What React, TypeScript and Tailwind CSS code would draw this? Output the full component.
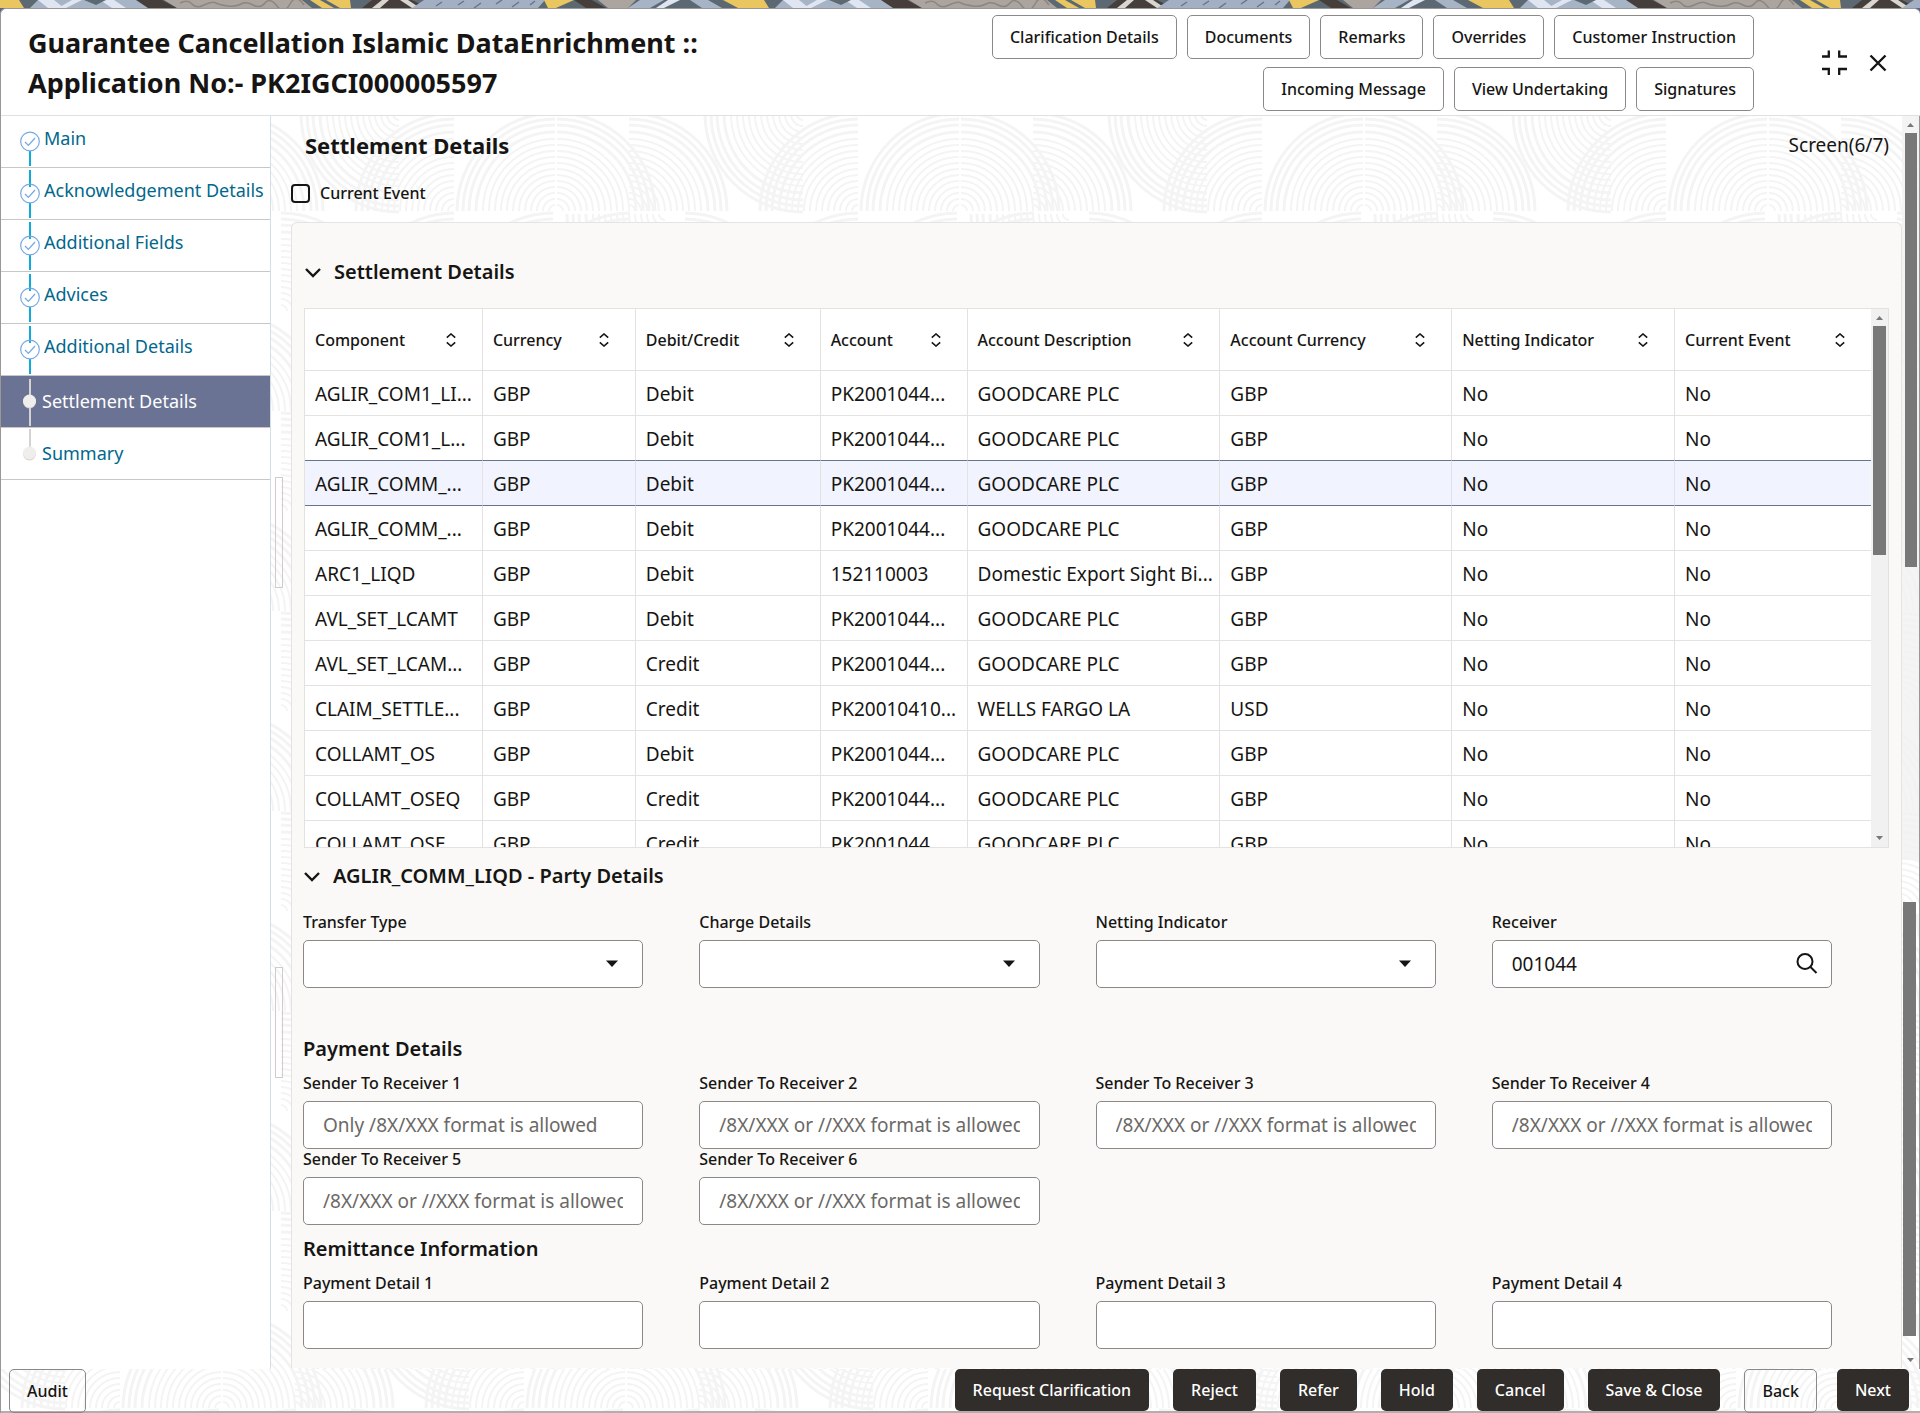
import React, { useState } from 'react';

interface Settlement {
  component: string;
  currency: string;
  type: string;
  account: string;
  description: string;
  accountCurrency: string;
}

interface Column {
  label: string;
  width: number;
}

const columns: Column[] = [
  { label: 'Component', width: 178 },
  { label: 'Currency', width: 153 },
  { label: 'Debit/Credit', width: 185 },
  { label: 'Account', width: 147 },
  { label: 'Account Description', width: 253 },
  { label: 'Account Currency', width: 232 },
  { label: 'Netting Indicator', width: 223 },
  { label: 'Current Event', width: 196 }
];

const settlements: Settlement[] = [
  { component: 'AGLIR_COM1_LI...', currency: 'GBP', type: 'Debit', account: 'PK2001044...', description: 'GOODCARE PLC', accountCurrency: 'GBP' },
  { component: 'AGLIR_COM1_L...', currency: 'GBP', type: 'Debit', account: 'PK2001044...', description: 'GOODCARE PLC', accountCurrency: 'GBP' },
  { component: 'AGLIR_COMM_...', currency: 'GBP', type: 'Debit', account: 'PK2001044...', description: 'GOODCARE PLC', accountCurrency: 'GBP' },
  { component: 'AGLIR_COMM_...', currency: 'GBP', type: 'Debit', account: 'PK2001044...', description: 'GOODCARE PLC', accountCurrency: 'GBP' },
  { component: 'ARC1_LIQD', currency: 'GBP', type: 'Debit', account: '152110003', description: 'Domestic Export Sight Bi...', accountCurrency: 'GBP' },
  { component: 'AVL_SET_LCAMT', currency: 'GBP', type: 'Debit', account: 'PK2001044...', description: 'GOODCARE PLC', accountCurrency: 'GBP' },
  { component: 'AVL_SET_LCAM...', currency: 'GBP', type: 'Credit', account: 'PK2001044...', description: 'GOODCARE PLC', accountCurrency: 'GBP' },
  { component: 'CLAIM_SETTLE...', currency: 'GBP', type: 'Credit', account: 'PK20010410...', description: 'WELLS FARGO LA', accountCurrency: 'USD' },
  { component: 'COLLAMT_OS', currency: 'GBP', type: 'Debit', account: 'PK2001044...', description: 'GOODCARE PLC', accountCurrency: 'GBP' },
  { component: 'COLLAMT_OSEQ', currency: 'GBP', type: 'Credit', account: 'PK2001044...', description: 'GOODCARE PLC', accountCurrency: 'GBP' },
  { component: 'COLLAMT_OSE...', currency: 'GBP', type: 'Credit', account: 'PK2001044...', description: 'GOODCARE PLC', accountCurrency: 'GBP' }
];

const steps = ['Main', 'Acknowledgement Details', 'Additional Fields', 'Advices', 'Additional Details', 'Settlement Details', 'Summary'];
const currentStep = 5;

const FORMAT_HINT = '/8X/XXX or //XXX format is allowed';

// Concentric quarter circles, used to build the background texture
const Arcs = ({ cx, cy, quadrant }: { cx: number; cy: number; quadrant: 'tl' | 'tr' | 'bl' }) => {
  const sx = quadrant === 'tr' ? 1 : -1;
  const sy = quadrant === 'bl' ? 1 : -1;
  const sweep = quadrant === 'tl' ? 1 : 0;
  return (
    <g>
      {[6, 12, 18, 24, 30, 36, 42, 48, 54, 60, 66, 72, 79, 86, 92, 98].map(r => (
        <path
          key={r}
          d={`M${cx + sx * r} ${cy} A${r} ${r} 0 0 ${sweep} ${cx} ${cy + sy * r}`}
          strokeWidth={r > 76 ? 3 : 2}
        />
      ))}
    </g>
  );
};

const Texture = ({ id, x, y }: { id: string; x: number; y: number }) => (
  <svg className="pointer-events-none absolute inset-0 h-full w-full" aria-hidden="true">
    <defs>
      <pattern id={id} x={x} y={y} width="404" height="200" patternUnits="userSpaceOnUse">
        <g fill="none" stroke="#f4f4f4">
          <Arcs cx={100} cy={99} quadrant="tl" />
          <Arcs cx={102} cy={99} quadrant="tr" />
          <Arcs cx={174} cy={99} quadrant="tr" />
          <Arcs cx={348} cy={2} quadrant="bl" />
          <Arcs cx={403} cy={99} quadrant="tl" />
          <Arcs cx={98} cy={199} quadrant="tl" />
          <Arcs cx={175} cy={199} quadrant="tl" />
          <Arcs cx={210} cy={102} quadrant="bl" />
          <Arcs cx={230} cy={199} quadrant="tr" />
          <Arcs cx={403} cy={199} quadrant="tl" />
        </g>
      </pattern>
    </defs>
    <rect width="100%" height="100%" fill={`url(#${id})`} />
  </svg>
);

const Banner = () => (
  <svg className="block h-2 w-full" aria-hidden="true">
    <defs>
      <pattern id="banner" width="745" height="8" patternUnits="userSpaceOnUse">
        <rect width="745" height="8" fill="#5c6872" />
        <path d="M0 0H19L24 8H0Z M723 0H745V8H738Z" fill="#eac660" />
        <path d="M38 0H146L160 8H30Z" fill="#a7b4c6" />
        <path d="M38 0H54L64 8H48Z M72 0H82L66 8H58Z M100 0H114L126 8H112Z" fill="#dfe6f2" />
        <path d="M84 0H106L96 5Z" fill="#5c6872" />
        <path d="M136 0H162L177 8H148Z" fill="#453e3b" />
        <path d="M164 0H302L312 8H177Z" fill="#aca59f" />
        <path
          d="M180 3q8 -4 12 1t12 1t12 -2t12 3t13 -2t12 1t12 -2t12 3t13 -2t14 1"
          fill="none"
          stroke="#8b8681"
          strokeWidth="1.5"
        />
        <path d="M310 0H320L334 8H322Z M326 0H350L351 8H340Z" fill="#eac660" />
        <path d="M372 0H412L428 8H362Z" fill="#453e3b" />
        <path d="M382 0H389L380 8H372Z M400 0H408L420 8H412Z" fill="#d9d5d0" />
        <path d="M424 0H545L538 8H412Z" fill="#a3b0c3" />
        <path d="M436 6l6-4M458 5l6-4M474 8l7-5M496 4l6-4M512 7l7-5M530 5l5-4" stroke="#68758a" strokeWidth="1.5" />
        <path d="M544 0H574L556 8H548Z" fill="#eac660" />
        <path d="M574 0H592L606 8H586Z" fill="#453e3b" />
        <path d="M598 0H636L628 8H608Z" fill="#aca59f" />
        <path d="M640 0H664L650 8H628Z M690 0H708L722 8H702Z" fill="#a7b4c6" />
        <path d="M668 0H680L664 8H656Z" fill="#dfe6f2" />
      </pattern>
    </defs>
    <rect width="100%" height="8" fill="url(#banner)" />
  </svg>
);

const OutlineButton = ({ children }: { children: React.ReactNode }) => (
  <button className="h-11 whitespace-nowrap rounded-[5px] border border-[#8b8886] px-[17px] text-base font-medium hover:bg-gray-50">
    {children}
  </button>
);

const DarkButton = ({ children }: { children: React.ReactNode }) => (
  <button className="h-full whitespace-nowrap rounded-[5px] bg-[#312d2a] px-[18px] text-base font-medium text-white hover:bg-black">
    {children}
  </button>
);

const ChevronDown = () => (
  <svg width="18" height="18" viewBox="0 0 18 18" fill="none" stroke="#161513" strokeWidth="2.4" aria-hidden="true">
    <path d="M2 6L9 13L16 6" />
  </svg>
);

const SortIcon = () => (
  <svg width="10" height="14" viewBox="0 0 10 14" fill="none" stroke="#161513" strokeWidth="1.6" aria-hidden="true">
    <path d="M0.8 4.6L5 1L9.2 4.6M0.8 9.4L5 13L9.2 9.4" />
  </svg>
);

const StepMarker = ({ index }: { index: number }) => {
  const done = index < currentStep;
  if (!done) {
    return (
      <svg width="24" height="51" viewBox="0 0 24 51" aria-hidden="true">
        <path d={index === currentStep ? 'M12 3V50' : 'M12 1V20'} stroke="#d5d3d1" strokeWidth="2" />
        <circle cx="11.5" cy="26" r="6.5" fill="#d5d3d1" />
        <circle cx="11.5" cy="25" r="6.5" fill="#efeeed" />
      </svg>
    );
  }
  return (
    <svg width="24" height="51" viewBox="0 0 24 51" fill="none" aria-hidden="true">
      <path d={index === 0 ? 'M12 35V50' : 'M12 2V19M12 35V50'} stroke="#0cabdb" strokeWidth="2" />
      <circle cx="12" cy="25.5" r="9.3" stroke="#76a9e3" strokeWidth="1.2" />
      <path d="M7 26L10.4 29.4L17 22" stroke="#76a9e3" strokeWidth="1.3" />
    </svg>
  );
};

const SelectField = ({ id, label }: { id: string; label: string }) => (
  <div>
    <label htmlFor={id} className="mb-2 block text-base leading-5 font-medium">{label}</label>
    <div className="relative">
      <select id={id} className="block h-12 w-full appearance-none rounded-[5px] border border-[#8b8886] bg-white px-5 text-[19px]">
        <option></option>
      </select>
      <svg className="pointer-events-none absolute top-5 right-[25px]" width="12" height="7" viewBox="0 0 12 7" aria-hidden="true">
        <path d="M0 0.5H12L6 7Z" fill="#161513" />
      </svg>
    </div>
  </div>
);

const TextField = ({ id, label, placeholder }: { id: string; label: string; placeholder?: string }) => (
  <div>
    <label htmlFor={id} className="mb-2 block text-base leading-5 font-medium">{label}</label>
    <input
      id={id}
      type="text"
      placeholder={placeholder}
      className="block h-12 w-full rounded-[5px] border border-[#8b8886] bg-white px-[19px] text-[19px] placeholder:text-[#6b6966]"
    />
  </div>
);

const SplitHandle = () => <div className="h-[111px] w-2 border border-[#cfcdcb]" />;

const SettlementTable = ({ selected, onSelect }: { selected: number; onSelect: (index: number) => void }) => (
  <div className="flex h-[540px] overflow-hidden border border-[#e4e2e0] bg-white">
    <div className="min-w-0 flex-1">
      <table className="w-full table-fixed border-separate border-spacing-0">
        <colgroup>
          {columns.map(col => <col key={col.label} style={{ width: `${col.width / 15.67}%` }} />)}
        </colgroup>
        <thead>
          <tr className="h-[62px]">
            {columns.map(col => (
              <th key={col.label} className="border-r border-b border-[#e4e2e0] pr-[26px] pl-2.5 text-left text-base font-medium last:border-r-0">
                <div className="flex items-center justify-between whitespace-nowrap">
                  {col.label}
                  <SortIcon />
                </div>
              </th>
            ))}
          </tr>
        </thead>
        <tbody>
          {settlements.map((row, index) => {
            const cells = [row.component, row.currency, row.type, row.account, row.description, row.accountCurrency, 'No', 'No'];
            const borderColor = index === selected || index === selected - 1 ? 'border-b-[#6b7394]' : 'border-b-[#e4e2e0]';
            return (
              <tr key={index} onClick={() => onSelect(index)} className={`h-[45px] ${index === selected ? 'bg-[#f1f4fe]' : ''}`}>
                {cells.map((cell, i) => (
                  <td key={i} className={`overflow-hidden border-r border-b border-r-[#e4e2e0] pt-0.5 pl-2.5 text-[19px] leading-6 whitespace-nowrap last:border-r-0 ${borderColor}`}>
                    {cell}
                  </td>
                ))}
              </tr>
            );
          })}
        </tbody>
      </table>
    </div>
    <div className="flex w-[17px] flex-col items-center bg-[#f1f1f1]">
      <svg width="17" height="17" viewBox="0 0 17 17" aria-hidden="true"><path d="M5 11H12L8.5 7Z" fill="#787878" /></svg>
      <div className="h-[229px] w-[13px] bg-[#787878]" />
      <svg className="mt-auto" width="17" height="17" viewBox="0 0 17 17" aria-hidden="true"><path d="M5 6H12L8.5 10Z" fill="#787878" /></svg>
    </div>
  </div>
);

const App: React.FC = () => {
  const [selected, setSelected] = useState(2);
  const [currentEvent, setCurrentEvent] = useState(false);

  return (
    <div className="flex min-h-screen flex-col bg-[#5c6590] font-['Noto_Sans',sans-serif] text-[#161513]">
      <Banner />
      <div className="flex flex-1 flex-col rounded-t-md border-t border-l border-[#9a9896] bg-white">
        <header className="flex h-[107px] items-center border-b border-[#e0e0e0] pt-0.5 pl-[27px]">
          <h1 className="w-[720px] text-[27px] leading-10 font-bold">
            Guarantee Cancellation Islamic DataEnrichment ::
            <br />
            Application No:- PK2IGCI000005597
          </h1>
          <div className="ml-auto flex flex-col items-end gap-2">
            <div className="flex gap-2.5">
              <OutlineButton>Clarification Details</OutlineButton>
              <OutlineButton>Documents</OutlineButton>
              <OutlineButton>Remarks</OutlineButton>
              <OutlineButton>Overrides</OutlineButton>
              <OutlineButton>Customer Instruction</OutlineButton>
            </div>
            <div className="flex gap-2.5">
              <OutlineButton>Incoming Message</OutlineButton>
              <OutlineButton>View Undertaking</OutlineButton>
              <OutlineButton>Signatures</OutlineButton>
            </div>
          </div>
          <div className="mr-8 ml-[66px] flex items-center gap-5">
            <button aria-label="Collapse">
              <svg width="28" height="28" viewBox="0 0 28 28" fill="none" stroke="#161513" strokeWidth="2.3">
                <path d="M2 7.5H8.8V1.5M19.2 1.5V7.5H27M2 20H8.8V26M19.2 26V20H27" />
              </svg>
            </button>
            <button aria-label="Close">
              <svg width="20" height="20" viewBox="0 0 20 20" fill="none" stroke="#161513" strokeWidth="2.4">
                <path d="M2.5 2.5L17.5 17.5M17.5 2.5L2.5 17.5" />
              </svg>
            </button>
          </div>
        </header>

        <div className="flex flex-1">
          <nav className="w-[270px] shrink-0 border-r border-[#d3dee6] bg-white">
            {steps.map((step, index) => (
              <a
                key={step}
                href="#"
                className={`flex h-[52px] border-b border-[#c9c7c5] pl-[17px] text-lg leading-6 whitespace-nowrap ${
                  index === currentStep ? 'bg-[#6b7394] text-white' : 'text-[#00688c]'
                }`}
              >
                <StepMarker index={index} />
                <span className={index < currentStep ? 'pt-2.5 pl-0.5' : 'pt-[13px]'}>{step}</span>
              </a>
            ))}
          </nav>

          <div className="relative flex min-w-0 flex-1">
            <Texture id="texture-main" x={184} y={-4} />
            <div className="relative flex w-5 shrink-0 flex-col gap-[379px] pt-[361px] pl-1">
              <SplitHandle />
              <SplitHandle />
            </div>

            <main className="relative min-w-0 flex-1">
              <div className="flex items-center justify-between pt-[13px] pr-[13px] pl-[14px]">
                <h2 className="text-[22px] leading-8 font-bold">Settlement Details</h2>
                <span className="text-[19px] leading-8">Screen(6/7)</span>
              </div>
              <label className="mt-5 mb-[17px] flex h-6 items-center gap-2.5 text-base font-medium">
                <input
                  type="checkbox"
                  checked={currentEvent}
                  onChange={() => setCurrentEvent(!currentEvent)}
                  className="h-[19px] w-[19px] appearance-none rounded-sm border-2 border-[#161513] checked:bg-[#161513]"
                />
                Current Event
              </label>

              <div className="rounded-t-md border border-b-0 border-[#e6e4e2] bg-[#faf9f7] pb-[19px]">
                <div className="pt-[33px] pr-3 pl-3">
                  <button className="mb-5 flex h-8 items-center gap-3 text-xl font-semibold">
                    <ChevronDown />
                    Settlement Details
                  </button>
                  <SettlementTable selected={selected} onSelect={setSelected} />
                </div>

                <div className="pt-3 pr-[69px] pl-[11px]">
                  <button className="mb-5 flex h-8 items-center gap-3 text-xl font-semibold">
                    <ChevronDown />
                    AGLIR_COMM_LIQD - Party Details
                  </button>
                  <div className="grid grid-cols-4 gap-x-14">
                    <SelectField id="transferType" label="Transfer Type" />
                    <SelectField id="chargeDetails" label="Charge Details" />
                    <SelectField id="nettingIndicator" label="Netting Indicator" />
                    <div>
                      <label htmlFor="receiver" className="mb-2 block text-base leading-5 font-medium">Receiver</label>
                      <div className="flex h-12 items-center rounded-[5px] border border-[#8b8886] bg-white pr-3 pl-[19px]">
                        <input id="receiver" type="text" defaultValue="001044" className="min-w-0 flex-1 text-[19px] outline-none" />
                        <button aria-label="Search receiver">
                          <svg width="24" height="24" viewBox="0 0 24 24" fill="none" stroke="#161513" strokeWidth="2">
                            <circle cx="10" cy="9.5" r="7.5" />
                            <path d="M15.5 15L21.5 21" />
                          </svg>
                        </button>
                      </div>
                    </div>
                  </div>

                  <h3 className="mt-[49px] mb-3 text-xl leading-6 font-semibold">Payment Details</h3>
                  <div className="grid grid-cols-4 gap-x-14">
                    <TextField id="sender1" label="Sender To Receiver 1" placeholder="Only /8X/XXX format is allowed" />
                    <TextField id="sender2" label="Sender To Receiver 2" placeholder={FORMAT_HINT} />
                    <TextField id="sender3" label="Sender To Receiver 3" placeholder={FORMAT_HINT} />
                    <TextField id="sender4" label="Sender To Receiver 4" placeholder={FORMAT_HINT} />
                    <TextField id="sender5" label="Sender To Receiver 5" placeholder={FORMAT_HINT} />
                    <TextField id="sender6" label="Sender To Receiver 6" placeholder={FORMAT_HINT} />
                  </div>

                  <h3 className="my-3 text-xl leading-6 font-semibold">Remittance Information</h3>
                  <div className="grid grid-cols-4 gap-x-14">
                    <TextField id="payment1" label="Payment Detail 1" />
                    <TextField id="payment2" label="Payment Detail 2" />
                    <TextField id="payment3" label="Payment Detail 3" />
                    <TextField id="payment4" label="Payment Detail 4" />
                  </div>
                </div>
              </div>
            </main>

            {/* page scrollbars */}
            <div className="relative flex w-[18px] shrink-0 flex-col border-r border-[#9a9896]">
              <div className="flex h-[744px] flex-col items-center bg-[#f1f1f1]/80">
                <svg width="17" height="17" viewBox="0 0 17 17" aria-hidden="true"><path d="M5 11H12L8.5 7Z" fill="#787878" /></svg>
                <div className="h-[434px] w-3 bg-[#787878]" />
              </div>
              <div className="mt-[42px] ml-px h-[434px] w-[13px] bg-[#787878]" />
              <svg className="mt-auto" width="17" height="17" viewBox="0 0 17 17" aria-hidden="true"><path d="M5 6H12L8.5 10Z" fill="#787878" /></svg>
            </div>
          </div>
        </div>

        <footer className="relative border-b-2 border-[#b3aeab]">
          <Texture id="texture-footer" x={120} y={-60} />
          <div className="relative flex h-[42px] items-stretch pr-[11px] pl-2">
            <OutlineButton>Audit</OutlineButton>
            <div className="ml-auto flex items-stretch gap-6">
              <DarkButton>Request Clarification</DarkButton>
              <DarkButton>Reject</DarkButton>
              <DarkButton>Refer</DarkButton>
              <DarkButton>Hold</DarkButton>
              <DarkButton>Cancel</DarkButton>
              <DarkButton>Save &amp; Close</DarkButton>
              <div className="flex items-stretch gap-5">
                <OutlineButton>Back</OutlineButton>
                <DarkButton>Next</DarkButton>
              </div>
            </div>
          </div>
        </footer>
      </div>
    </div>
  );
};

export default App;
